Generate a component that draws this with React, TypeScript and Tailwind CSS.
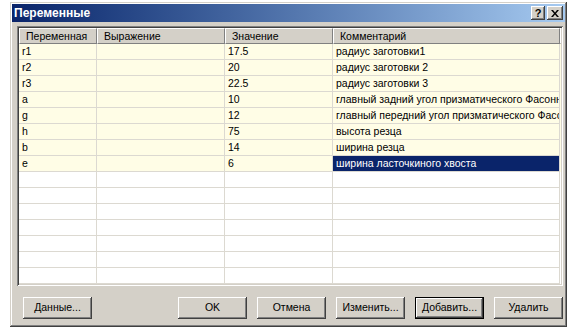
import React from 'react';

type Row = { name: string; expr: string; value: string; comment: string; selected?: boolean };

const rows: Row[] = [
    { name: 'r1', expr: '', value: '17.5', comment: 'радиус заготовки1' },
    { name: 'r2', expr: '', value: '20', comment: 'радиус заготовки 2' },
    { name: 'r3', expr: '', value: '22.5', comment: 'радиус заготовки 3' },
    { name: 'a', expr: '', value: '10', comment: 'главный задний угол призматического Фасонного резца' },
    { name: 'g', expr: '', value: '12', comment: 'главный передний угол призматического Фасонного резца' },
    { name: 'h', expr: '', value: '75', comment: 'высота резца' },
    { name: 'b', expr: '', value: '14', comment: 'ширина резца' },
    { name: 'e', expr: '', value: '6', comment: 'ширина ласточкиного хвоста', selected: true },
];

const EMPTY_ROWS = 7;

const raised =
    'shadow-[inset_-1px_-1px_0_#404040,inset_1px_1px_0_#ffffff,inset_-2px_-2px_0_#808080,inset_2px_2px_0_#d4d0c8]';

const columns = [
    { title: 'Переменная', w: 'w-[78px]' },
    { title: 'Выражение', w: 'w-[128px]' },
    { title: 'Значение', w: 'w-[108px]' },
    { title: 'Комментарий', w: 'w-[227px]' },
];

const Button: React.FC<{ label: string; isDefault?: boolean }> = ({ label, isDefault }) => (
    <button
        className={
            'h-[22px] w-[69px] bg-[#d4d0c8] text-[10.5px] text-black flex items-center justify-center ' +
            (isDefault
                ? 'border border-black shadow-[inset_-1px_-1px_0_#404040,inset_1px_1px_0_#ffffff,inset_-2px_-2px_0_#808080]'
                : raised)
        }
    >
        {label}
    </button>
);

// one grid cell; text that is too long is clipped like in the original list view
const Cell: React.FC<{ w: string; children?: React.ReactNode; selected?: boolean }> = ({ w, children, selected }) => (
    <div
        className={
            w +
            ' h-[16px] shrink-0 border-r border-b border-[#dcd9d1] pl-[3px] leading-[15px] overflow-hidden whitespace-nowrap ' +
            (selected ? 'bg-[#0a246a] text-white' : '')
        }
    >
        {children}
    </div>
);

export default function App() {
    return (
        <div
            className="w-[573px] h-[330px] bg-white pt-[2px] pl-[10px] overflow-hidden"
            style={{ fontFamily: '"Liberation Sans", Arial, sans-serif' }}
        >
            <div className="w-[557px] h-[325px] bg-[#d4d0c8] p-[2px] flex flex-col shadow-[inset_-1px_-1px_0_#404040,inset_1px_1px_0_#d4d0c8,inset_-2px_-2px_0_#808080,inset_2px_2px_0_#ffffff]">
                {/* title bar */}
                <div className="h-[18px] flex items-center justify-between bg-gradient-to-r from-[#0a246a] to-[#a6caf0] pl-[2px] pr-[2px]">
                    <span className="text-white font-bold text-[12px] leading-none">Переменные</span>
                    <div className="flex items-center gap-[2px]">
                        <div className={'w-[14px] h-[14px] bg-[#d4d0c8] flex items-center justify-center text-[11px] font-bold text-black leading-none ' + raised}>
                            ?
                        </div>
                        <div className={'w-[16px] h-[14px] bg-[#d4d0c8] flex items-center justify-center ' + raised}>
                            <svg width="8" height="7" viewBox="0 0 8 7">
                                <path d="M0 0h2l2 2.5L6 0h2L5 3.5 8 7H6L4 4.5 2 7H0l3-3.5z" fill="#000" />
                            </svg>
                        </div>
                    </div>
                </div>

                {/* table */}
                <div className="mt-[4px] ml-[5px] w-[546px] h-[260px] bg-white p-[2px] shadow-[inset_1px_1px_0_#808080,inset_-1px_-1px_0_#ffffff,inset_2px_2px_0_#404040,inset_-2px_-2px_0_#d4d0c8] text-[10.5px] text-black">
                    <div className="h-full overflow-hidden">
                        <div className="flex h-[16px] bg-[#d4d0c8]">
                            {columns.map((c) => (
                                <div
                                    key={c.title}
                                    className={
                                        c.w +
                                        ' shrink-0 h-[16px] pl-[6px] leading-[15px] border-t border-l border-white border-r border-r-[#808080] border-b border-b-[#808080] whitespace-nowrap overflow-hidden'
                                    }
                                >
                                    {c.title}
                                </div>
                            ))}
                            <div className="flex-1 border-t border-l border-white border-b border-b-[#808080]" />
                        </div>
                        {rows.map((r) => (
                            <div key={r.name} className="flex bg-[#fffde6]">
                                <Cell w="w-[78px]">{r.name}</Cell>
                                <Cell w="w-[128px]">{r.expr}</Cell>
                                <Cell w="w-[108px]">{r.value}</Cell>
                                <Cell w="w-[227px]" selected={r.selected}>
                                    {r.comment}
                                </Cell>
                            </div>
                        ))}
                        {Array.from({ length: EMPTY_ROWS }).map((_, i) => (
                            <div key={i} className="flex bg-white">
                                <Cell w="w-[78px]" />
                                <Cell w="w-[128px]" />
                                <Cell w="w-[108px]" />
                                <Cell w="w-[227px]" />
                            </div>
                        ))}
                    </div>
                </div>

                {/* buttons */}
                <div className="mt-[11px] flex items-center pl-[11px]">
                    <Button label="Данные..." />
                    <div className="ml-[86px] flex gap-[10px]">
                        <Button label="OK" />
                        <Button label="Отмена" />
                        <Button label="Изменить..." />
                        <Button label="Добавить..." isDefault />
                        <Button label="Удалить" />
                    </div>
                </div>
            </div>
        </div>
    );
}
